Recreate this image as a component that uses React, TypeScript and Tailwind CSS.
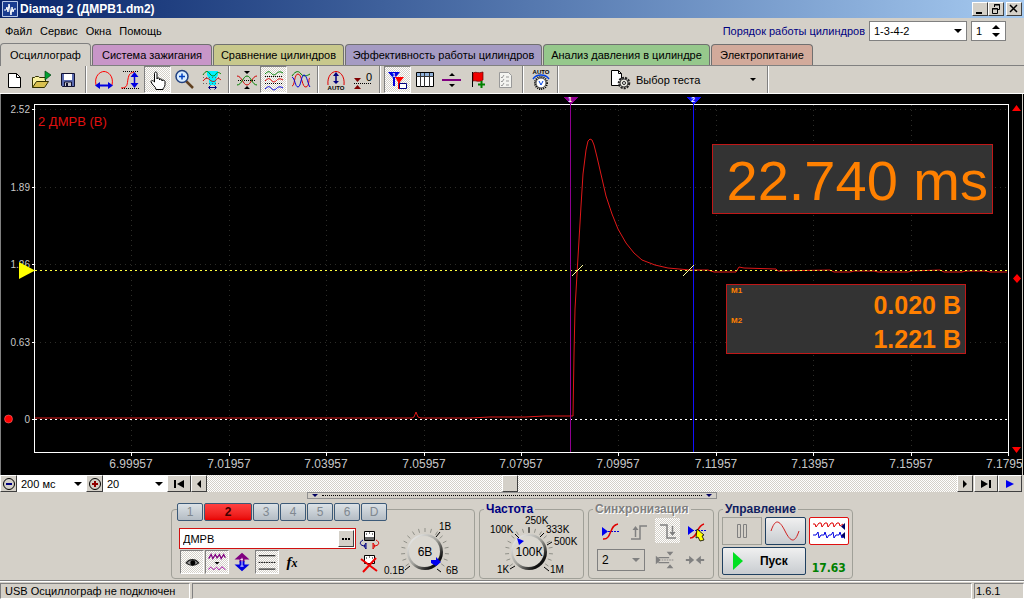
import React from "react";
import clsx from "clsx";

const hatch =
  "bg-[repeating-conic-gradient(#ffffff_0_25%,#d4d0c8_0_50%)] bg-[length:2px_2px]";
const raised =
  "border border-t-white border-l-white border-r-[#404040] border-b-[#404040] bg-[#d4d0c8]";
const sunken =
  "border border-t-[#808080] border-l-[#808080] border-r-white border-b-white";

const Icon: React.FC<{ children: React.ReactNode; className?: string }> = ({
  children,
  className = "w-6 h-6",
}) => (
  <svg viewBox="0 0 24 24" fill="none" className={clsx("shrink-0", className)}>
    {children}
  </svg>
);

/* ---------- toolbar icons ---------- */

const icons = {
  newFile: (
    <>
      <path d="M5.500 5.500h8l4 4v10h-12z" fill="#fff" stroke="#000" />
      <path d="M13.500 5.500v4h4" stroke="#000" />
    </>
  ),
  open: (
    <>
      <path d="M2.500 19.500v-10h2l1-1h3l1 1h6v4" fill="#f8f0a0" stroke="#303000" />
      <path d="M2.500 19.500l4-6h12l-4 6z" fill="#d8c050" stroke="#303000" />
      <path d="M15 3v9l6-5z" fill="#00a030" stroke="#004010" strokeWidth=".7" />
    </>
  ),
  save: (
    <>
      <path d="M4.500 5.500h13v13h-12l-1-1z" fill="#5a6ab0" stroke="#101030" />
      <path d="M7 6h8v6H7z" fill="#fff" />
      <path d="M7.500 14h7v4.500h-7z" fill="#c8c8d0" stroke="#101030" />
      <path d="M9 15h2v3H9z" fill="#101030" />
    </>
  ),
  width: (
    <>
      <path d="M4 17C2 8 8 3.500 12 3.500s10 4.500 8 13.500" stroke="#f00" />
      <path d="M5 17.500h14" stroke="#0000e0" strokeWidth="2" />
      <path d="M3 17.500l5-3.500v7zM21 17.500l-5-3.500v7z" fill="#0000e0" />
    </>
  ),
  height: (
    <>
      <path d="M4 3.500h16M3 20.500h18" stroke="#000" strokeDasharray="1 1" />
      <path d="M2 20c7 0 6-4 7-9s2-6 6-7" stroke="#f00" />
      <path d="M15.500 6v12" stroke="#0000e0" strokeWidth="1.500" />
      <path d="M15.500 4l-4 5h8zM15.500 20l-4-5h8z" fill="#0000e0" />
    </>
  ),
  hand: (
    <path
      d="M8.500 14V5.500c0-2 2.500-2 2.500 0V11c0-1.500 2.500-1.500 2.500 0v1c0-1.500 2.500-1.500 2.500 0v1c0-1.500 3-1 3 .5v3c0 3-2 3-2 5h-7c0-3-4-4-5-8 0-1 2-1.500 3.500.500z"
      fill="#fff"
      stroke="#000"
    />
  ),
  magnifier: (
    <>
      <path d="M13 13l7 7" stroke="#604020" strokeWidth="2.500" />
      <circle cx="9" cy="8.500" r="6" fill="#d8ecff" stroke="#204080" strokeWidth="1.500" />
      <path d="M6 8.500h6M9 5.500v6" stroke="#0040c0" strokeWidth="1.500" />
    </>
  ),
  waveZoom: (
    <>
      <path d="M7 3h11v4l-2 4v6H9v-6L7 7z" fill="#00f0ff" />
      <path d="M3 7c3-5 5-4 7-1s5 2 6 0 3-2 5 0" stroke="#008000" />
      <path d="M3 13c3-4 5-3 7-1s5 2 6 0 3-2 5 0" stroke="#d00000" />
      <path d="M3 9.500h18M3 15.500h18" stroke="#666" strokeDasharray="1 2" />
      <path d="M9 19.500h7M10.500 17.500l-2 2 2 2M14.500 17.500l2 2-2 2" stroke="#000080" />
    </>
  ),
  merge: (
    <>
      <path d="M9 3h6l-3 3zM9 21h6l-3-3z" fill="#000" />
      <path d="M3 12.500h18" stroke="#000" strokeDasharray="1 1" />
      <path d="M2 8c5 0 6 9 10 9s5-9 10-9" stroke="#d00000" />
      <path d="M2 17c5 0 6-9 10-9s5 9 10 9" stroke="#008000" />
    </>
  ),
  waves: (
    <>
      <path d="M3 6c4-4 5-2 7 0s4 0 5-1 3-2 6 0" stroke="#008000" />
      <path d="M3 13c4-4 5-2 7 0s4 0 5-1 3-2 6 0" stroke="#e00000" />
      <path d="M3 21c4-4 5-2 7 0s4 0 5-1 3-2 6 0" stroke="#0000e0" />
      <path d="M3 8.500h18M3 15.500h18" stroke="#000" strokeDasharray="1 1" />
    </>
  ),
  overlay: (
    <>
      <path d="M3 8c4-6 7-5 9-2s6 2 9 0" stroke="#008000" />
      <path d="M3 18c3 0 2-12 6-12s4 14 8 13 2-9 4-9" stroke="#e00000" />
      <path d="M3 9c3 1 3 10 6 10s3-12 6-12 4 10 6 12" stroke="#0000e0" />
    </>
  ),
  autoBell: (
    <>
      <path d="M4 17C3 8 8 3.500 12 3.500s9 4.500 8 13.500" stroke="#e00000" />
      <path d="M12 6v8" stroke="#000080" strokeWidth="1.500" />
      <path d="M12 4l-3 4h6zM12 16l-3-3h6z" fill="#000080" />
      <text x="12" y="22" fontSize="6" fontWeight="bold" textAnchor="middle" fill="#000">AUTO</text>
    </>
  ),
  zero: (
    <>
      <path d="M3 10h7l-3.500 4zM3 21h7l-3.500-4z" fill="#800000" />
      <path d="M3 15.500h18" stroke="#000" strokeDasharray="1 1" />
      <text x="18" y="13" fontSize="11" textAnchor="middle" fill="#000">0</text>
    </>
  ),
  markers: (
    <>
      <path d="M2 4h12l-5 6v8H7v-8z" fill="#0000e0" />
      <path d="M9 9h9l-4 5v7h-2v-7z" fill="#f00" />
      <text x="8" y="9" fontSize="6" fontWeight="bold" textAnchor="middle" fill="#fff">1</text>
      <path d="M13.500 15.500h7v5h-7z" fill="#fff" stroke="#000080" />
    </>
  ),
  table: (
    <>
      <path d="M3.500 4.500h17v14h-17z" fill="#fff" stroke="#000" />
      <path d="M4 5h16v3H4z" fill="#8fb0d8" />
      <path d="M3.500 8.500h17M7.500 5v14M11.500 5v14M16.500 5v14" stroke="#333" />
    </>
  ),
  split: (
    <>
      <path d="M9 8h6l-3-3zM9 16h6l-3 3z" fill="#000" />
      <path d="M2 12h19" stroke="#800080" strokeWidth="2" />
    </>
  ),
  flag: (
    <>
      <path d="M5.500 4v15" stroke="#000" />
      <path d="M6 5c3-2 5 1 10-1v8c-5 3-7 0-10 1z" fill="#f00000" stroke="#600" strokeWidth=".7" />
      <path d="M14.500 13v7M11 16.500h7" stroke="#008000" strokeWidth="2" />
    </>
  ),
  checklist: (
    <>
      <path d="M5.500 4.500h9l3 3v12h-12z" fill="#f4f4f0" stroke="#999" />
      <path d="M7 9l1 1 2-3M7 13l1 1 2-3M7 17l1 1 2-3M12 9h3M12 13h3M12 17h3" stroke="#999" />
    </>
  ),
  autoKnob: (
    <>
      <text x="12" y="6" fontSize="6" fontWeight="bold" textAnchor="middle" fill="#000">AUTO</text>
      <path d="M4 11c2-3 4-4 8-4s6 1 8 4" stroke="#0040e0" strokeWidth="1.500" />
      <circle cx="12" cy="15" r="6" stroke="#000" strokeWidth="2" strokeDasharray="1 1" />
      <circle cx="12" cy="15" r="5" fill="#fff" stroke="#444" />
      <path d="M10 13l2 4 2-4" stroke="#0040e0" />
    </>
  ),
  testGear: (
    <>
      <path d="M3.500 2.500h7l3 3v12h-10z" fill="#fff" stroke="#000" />
      <path d="M10.500 2.500v3h3" stroke="#000" />
      <circle cx="16" cy="15" r="5" fill="#d4d0c8" stroke="#222" strokeWidth="2.500" strokeDasharray="2 1" />
      <circle cx="16" cy="15" r="4" fill="#e8e8e0" stroke="#444" />
      <circle cx="16" cy="15" r="1.500" fill="#fff" stroke="#222" />
    </>
  ),
};

type IconName = keyof typeof icons;

const toolbar: { name: IconName; label: string; pressed?: boolean }[][] = [
  [
    { name: "newFile", label: "Новый" },
    { name: "open", label: "Открыть" },
    { name: "save", label: "Сохранить" },
  ],
  [
    { name: "width", label: "Ширина" },
    { name: "height", label: "Высота" },
    { name: "hand", label: "Рука", pressed: true },
    { name: "magnifier", label: "Увеличить" },
    { name: "waveZoom", label: "Фрагмент" },
  ],
  [
    { name: "merge", label: "Совместить" },
    { name: "waves", label: "Раздельно", pressed: true },
    { name: "overlay", label: "Наложить" },
  ],
  [
    { name: "autoBell", label: "Авто" },
    { name: "zero", label: "Ноль" },
  ],
  [
    { name: "markers", label: "Маркеры", pressed: true },
    { name: "table", label: "Таблица" },
    { name: "split", label: "Разделить" },
    { name: "flag", label: "Метка" },
    { name: "checklist", label: "Список" },
  ],
  [{ name: "autoKnob", label: "Автонастройка" }],
];

const tabs = [
  { label: "Система зажигания", className: "w-[120px] bg-[#c896c8]" },
  { label: "Сравнение цилиндров", className: "w-[131px] bg-[#c8c88c]" },
  { label: "Эффективность работы цилиндров", className: "w-[197px] bg-[#a59bc3]" },
  { label: "Анализ давления в цилиндре", className: "w-[167px] bg-[#96c88c]" },
  { label: "Электропитание", className: "w-[102px] bg-[#d2aa9b]" },
];

const Separator = () => (
  <div className="flex w-2 justify-center">
    <div className="w-0.5 border-l border-[#808080] bg-white" />
  </div>
);

const Dropdown: React.FC<{
  label: string;
  value: string;
  className?: string;
  disabled?: boolean;
}> = ({ label, value, className, disabled }) => (
  <div className={clsx("relative", className)}>
    <select
      aria-label={label}
      disabled={disabled}
      className="block h-full w-full appearance-none pl-1 text-black opacity-100 focus:outline-none"
    >
      <option>{value}</option>
    </select>
    <svg
      viewBox="0 0 8 4"
      className="pointer-events-none absolute right-1 top-1/2 h-1 w-2 -translate-y-1/2"
    >
      <path d="M0 0h8L4 4z" fill={disabled ? "#808080" : "#000"} />
    </svg>
  </div>
);

const TitleBar = () => (
  <header className="flex h-[18px] items-center bg-linear-to-r from-[#0a246a] to-[#a6caf0] pl-0.5 pr-0.5 text-white">
    <svg viewBox="0 0 16 16" className="h-4 w-4">
      <path d="M.5.500h15v15H.500z" fill="#1a3c90" stroke="#b8c8e8" />
      <path d="M2 9h2l1-3 1 5 1-8 2 11 1-8 1 5 1-3h2" stroke="#fff" fill="none" />
    </svg>
    <h1 className="ml-0.5 grow text-[12px] font-bold">Diamag 2 (ДМРВ1.dm2)</h1>
    <button aria-label="Свернуть" className={clsx(raised, "h-3.5 w-4")}>
      <svg viewBox="0 0 14 12" className="h-3 w-3.5">
        <path d="M3 9h6v2H3z" />
      </svg>
    </button>
    <button aria-label="Восстановить" className={clsx(raised, "h-3.5 w-4")}>
      <svg viewBox="0 0 14 12" className="h-3 w-3.5" fill="none" stroke="#000">
        <path d="M5.500 4V1.500h5v5H9M5 2h6M3.500 5.500h5v5h-5zM3 6h6" />
      </svg>
    </button>
    <button aria-label="Закрыть" className={clsx(raised, "ml-0.5 h-3.5 w-4")}>
      <svg viewBox="0 0 14 12" className="h-3 w-3.5" stroke="#000" strokeWidth="1.500">
        <path d="M3 2l7 7M10 2l-7 7" />
      </svg>
    </button>
  </header>
);

const MenuBar = () => (
  <div className="flex h-[25px] items-center justify-between pl-[5px] pr-[18px]">
    <nav className="flex gap-2">
      <button>Файл</button>
      <button>Сервис</button>
      <button>Окна</button>
      <button>Помощь</button>
    </nav>
    <div className="flex items-center gap-1">
      <span className="text-[#000080]">Порядок работы цилиндров</span>
      <Dropdown
        label="Порядок работы цилиндров"
        value="1-3-4-2"
        className="h-5 w-[98px] border border-[#808080] bg-white"
      />
      <div className="flex h-5 w-[35px] items-center border border-[#808080] bg-white">
        <input
          aria-label="Номер цилиндра"
          defaultValue="1"
          className="w-5 pl-1 focus:outline-none"
        />
        <div className="flex flex-col gap-1">
          <button aria-label="Больше">
            <svg viewBox="0 0 8 4" className="block h-1 w-2"><path d="M0 4h8L4 0z" /></svg>
          </button>
          <button aria-label="Меньше">
            <svg viewBox="0 0 8 4" className="block h-1 w-2"><path d="M0 0h8L4 4z" /></svg>
          </button>
        </div>
      </div>
    </div>
  </div>
);

const Tabs = () => (
  <div role="tablist" className="flex h-[23px] items-end gap-px border-b border-[#808080]">
    <button
      role="tab"
      aria-selected="true"
      className="-mb-px h-[23px] w-[91px] rounded-t border border-b-0 border-[#808080] bg-[#d4d0c8]"
    >
      Осциллограф
    </button>
    {tabs.map((tab) => (
      <button
        key={tab.label}
        role="tab"
        aria-selected="false"
        className={clsx(
          "h-[21px] whitespace-nowrap rounded-t border border-b-0 border-[#707070]",
          tab.className
        )}
      >
        {tab.label}
      </button>
    ))}
  </div>
);

const Toolbar = () => (
  <div className="flex h-[27px] pl-px">
    {toolbar.map((group, i) => (
      <React.Fragment key={i}>
        {group.map((item) => (
          <button
            key={item.name}
            aria-label={item.label}
            className={clsx(
              "flex w-[27px] items-center justify-center",
              item.pressed && [hatch, sunken]
            )}
          >
            <Icon>{icons[item.name]}</Icon>
          </button>
        ))}
        <Separator />
      </React.Fragment>
    ))}
    <button className="flex w-[202px] items-center pl-[46px] pr-2">
      <Icon>{icons.testGear}</Icon>
      <span className="ml-1 grow text-left">Выбор теста</span>
      <svg viewBox="0 0 6 3" className="h-[3px] w-1.5"><path d="M0 0h6L3 3z" /></svg>
    </button>
    <Separator />
  </div>
);

/* ---------- oscilloscope screen ---------- */

const yTicks = [
  { y: 15, label: "2.52" },
  { y: 93, label: "1.89" },
  { y: 170, label: "1.26" },
  { y: 248, label: "0.63" },
  { y: 325, label: "0" },
];
const xTicks = [
  { x: 131, label: "6.99957" },
  { x: 229, label: "7.01957" },
  { x: 326, label: "7.03957" },
  { x: 424, label: "7.05957" },
  { x: 521, label: "7.07957" },
  { x: 618, label: "7.09957" },
  { x: 716, label: "7.11957" },
  { x: 813, label: "7.13957" },
  { x: 911, label: "7.15957" },
  { x: 1008, label: "7.1795" },
];

const trace =
  "M35 324H412L414 323 416 318 418 323 421 324H470L490 323H525L545 322 573 322 " +
  "574 260 575 215 577 180 579 146 581 112 583 80 586 56 588 47 590 45 592 46 594 51 " +
  "597 63 600 76 606 102 612 120 618 135 626 149 634 159 642 166 655 171 668 174 690 176 " +
  "H708L714 178H736L739 173 744 174 776 175 778 177 830 176 834 178 850 178 854 177 874 177 878 178 " +
  "908 178 912 177 940 176 944 178 962 178 966 177 986 177 990 178 1007 178";

const Screen = () => (
  <main className="relative border-t border-white bg-black">
    <svg
      viewBox="0 0 1024 381"
      className="block w-full"
      fill="none"
      shapeRendering="crispEdges"
    >
      <path d="M.5 0v381" stroke="#808080" />
      <path d="M1022.500 0v381" stroke="#d4d0c8" />

      {yTicks.map((t) => (
        <g key={t.label}>
          <path d={`M35 ${t.y + 0.5}H1008`} stroke="#2c2c28" strokeDasharray="1 4" />
          <path d={`M32 ${t.y + 0.5}h3`} stroke="#fff" />
          <text x="30" y={t.y + 4} fontSize="10" textAnchor="end" fill="#c8c8c8">
            {t.label}
          </text>
        </g>
      ))}
      {xTicks.map((t) => (
        <g key={t.label}>
          <path d={`M${t.x + 0.5} 11V358`} stroke="#2c2c28" strokeDasharray="1 4" />
          <path d={`M${t.x + 0.5} 358v4`} stroke="#fff" />
          <text
            x={t.x === 1008 ? 986 : t.x}
            y="374"
            fontSize="12"
            textAnchor={t.x === 1008 ? "start" : "middle"}
            fill="#c8c8c8"
          >
            {t.label}
          </text>
        </g>
      ))}
      <path d="M34.500 10.500H1008.500V358.500H34.500z" stroke="#fff" />

      <text x="38" y="32" fontSize="13" fill="#e01010">2 ДМРВ (В)</text>

      <path d="M35 325.500H1008" stroke="#fff" strokeDasharray="2 3" />
      <path d={trace} stroke="#e01818" shapeRendering="auto" />
      <path d="M35 176.500H1008" stroke="#ffff40" strokeDasharray="2 3" />

      <path d="M570.500 5V358" stroke="#900090" />
      <path d="M563 3h15l-7 7z" fill="#900090" />
      <path d="M693.500 5V358" stroke="#1010ff" />
      <path d="M686 3h15l-7 7z" fill="#1010ff" />
      <g fill="#fff" fontSize="7" fontWeight="bold" textAnchor="middle">
        <text x="570" y="8">1</text>
        <text x="693" y="8">2</text>
      </g>
      <path d="M572 182l11-11M683 182l11-11" stroke="#ffffa0" shapeRendering="auto" />

      <g shapeRendering="auto">
        <path d="M19 168v17l16-8.500z" fill="#ff0" />
        <circle cx="8.500" cy="325" r="4" fill="#f00" stroke="#f88" strokeWidth=".5" />
        <path d="M1012 17h9l-4.500-6zM1012 353h9l-4.500 6zM1017 180l4 4.500-4 4.500-4-4.500z" fill="#f00" />
      </g>
    </svg>

    <div className="absolute right-[31px] top-[50px] flex h-[70px] w-[281px] items-center justify-end border border-[#c01818] bg-[#333] pr-1 pt-1 text-[56px] leading-none text-[#ff8000]">
      22.740 ms
    </div>
    <dl className="absolute right-[58px] top-[190px] grid h-[70px] w-[240px] grid-cols-[auto_1fr] grid-rows-[30px_38px] border border-[#c01818] bg-[#333] px-1 font-bold text-[#ff8000]">
      <dt className="text-[8px] leading-3">M1</dt>
      <dd className="text-right text-[25px] leading-10">0.020 В</dd>
      <dt className="text-[8px] leading-3">M2</dt>
      <dd className="text-right text-[25px] leading-12">1.221 В</dd>
    </dl>
  </main>
);

const ScrollRow = () => (
  <div className="flex h-[17px]">
    <button aria-label="Уменьшить развёртку" className={clsx(raised, "flex w-[17px] items-center justify-center")}>
      <svg viewBox="0 0 14 14" className="h-3.5 w-3.5" fill="none">
        <circle cx="7" cy="7" r="5.500" stroke="#000" />
        <path d="M4 7h6" stroke="#000080" strokeWidth="2" />
      </svg>
    </button>
    <Dropdown label="Развёртка" value="200 мс" className="w-[69px] bg-white" />
    <button aria-label="Увеличить масштаб" className={clsx(raised, "flex w-[17px] items-center justify-center")}>
      <svg viewBox="0 0 14 14" className="h-3.5 w-3.5" fill="none">
        <circle cx="7" cy="7" r="5.500" stroke="#000" />
        <path d="M4 7h6M7 4v6" stroke="#900000" strokeWidth="2" />
      </svg>
    </button>
    <Dropdown label="Масштаб" value="20" className="w-16 bg-white" />
    <button aria-label="В начало" className={clsx(raised, "flex w-6 items-center justify-center")}>
      <svg viewBox="0 0 12 8" className="h-2 w-3"><path d="M1 0h2v8H1zM11 0v8L4 4z" /></svg>
    </button>
    <button aria-label="Назад" className={clsx(raised, "flex w-4 items-center justify-center")}>
      <svg viewBox="0 0 4 8" className="h-2 w-1"><path d="M4 0v8L0 4z" /></svg>
    </button>
    <input
      type="range"
      aria-label="Прокрутка"
      min={0}
      max={1000}
      defaultValue={402}
      className={clsx(
        hatch,
        "h-full min-w-0 grow appearance-none [&::-webkit-slider-thumb]:h-[17px] [&::-webkit-slider-thumb]:w-4 [&::-webkit-slider-thumb]:appearance-none [&::-webkit-slider-thumb]:border [&::-webkit-slider-thumb]:border-t-white [&::-webkit-slider-thumb]:border-l-white [&::-webkit-slider-thumb]:border-r-[#404040] [&::-webkit-slider-thumb]:border-b-[#404040] [&::-webkit-slider-thumb]:bg-[#d4d0c8]"
      )}
    />
    <button aria-label="Вперёд" className={clsx(raised, "flex w-4 items-center justify-center")}>
      <svg viewBox="0 0 4 8" className="h-2 w-1"><path d="M0 0v8l4-4z" /></svg>
    </button>
    <button aria-label="В конец" className={clsx(raised, "ml-px flex w-6 items-center justify-center")}>
      <svg viewBox="0 0 12 8" className="h-2 w-3"><path d="M9 0h2v8H9zM1 0v8l7-4z" /></svg>
    </button>
    <button aria-label="Воспроизвести" className={clsx(raised, "mr-0.5 flex w-6 items-center justify-center")}>
      <svg viewBox="0 0 8 8" className="h-2 w-2"><path d="M0 0v8l8-4z" fill="#0000f0" /></svg>
    </button>
  </div>
);

/* ---------- control panels ---------- */

const Group: React.FC<{
  title: string;
  titleClass: string;
  className?: string;
  children: React.ReactNode;
}> = ({ title, titleClass, className, children }) => (
  <fieldset className={clsx("h-[77px] min-w-0 rounded border border-[#a0a098]", className)}>
    <legend className={clsx("ml-1 px-0.5 text-[12px] font-bold leading-[14px]", titleClass)}>
      {title}
    </legend>
    {children}
  </fieldset>
);

const dialTicks = Array.from({ length: 17 }, (_, i) => -216 + i * 15.75);

const Dial: React.FC<{
  label: string;
  value: string;
  cx: number;
  cy: number;
  pointer: string;
  children: React.ReactNode;
}> = ({ label, value, cx, cy, pointer, children }) => (
  <div className="relative min-w-0 grow">
    <svg viewBox="0 0 100 62" className="block h-[62px] w-[100px] overflow-visible" fontSize="10">
      <defs>
        <linearGradient id={`rim-${value}`} x1="0" y1="0" x2="1" y2="1">
          <stop offset="0" stopColor="#fff" />
          <stop offset=".5" stopColor="#a0a09a" />
          <stop offset=".8" stopColor="#101010" />
        </linearGradient>
      </defs>
      {dialTicks.map((a) => {
        const c = Math.cos((a * Math.PI) / 180);
        const s = Math.sin((a * Math.PI) / 180);
        return (
          <path
            key={a}
            d={`M${cx + c * 20} ${cy + s * 20}L${cx + c * 24} ${cy + s * 24}`}
            stroke="#909088"
          />
        );
      })}
      <circle cx={cx} cy={cy} r="18" fill={`url(#rim-${value})`} />
      <circle cx={cx - 0.5} cy={cy - 0.5} r="15.500" fill="#dad7d0" />
      <path d={pointer} fill="#0000f0" />
      <text x={cx} y={cy + 4} fontSize="12" textAnchor="middle">
        {value}
      </text>
      {children}
    </svg>
    <input
      type="range"
      aria-label={label}
      className="absolute inset-0 h-full w-full cursor-pointer opacity-0"
    />
  </div>
);

const channels = ["1", "2", "3", "4", "5", "6", "D"];

const ChannelPanel = () => (
  <fieldset className="h-[77px] w-[304px] min-w-0 rounded border border-[#a0a098]">
    <legend className="ml-[5px] flex h-3.5 gap-px pt-px">
      {channels.map((ch) => (
        <button
          key={ch}
          className={clsx(
            "h-[18px] rounded-xs border border-[#3c5a78] text-[12px]",
            ch === "2"
              ? "w-12 bg-linear-to-b from-[#ff4040] to-[#e80000] font-bold text-[#400000]"
              : "w-[26px] bg-linear-to-b from-[#dce2e6] to-[#b4bcc4] text-[#808890]"
          )}
        >
          {ch}
        </button>
      ))}
    </legend>
    <div className="flex pl-[7px]">
      <div className="w-[177px] shrink-0 pt-3">
        <div className="flex h-[21px] border border-[#d01010] bg-white p-px">
          <input
            aria-label="Имя канала"
            defaultValue="ДМРВ"
            className="min-w-0 grow pl-0.5 focus:outline-none"
          />
          <button aria-label="Выбрать датчик" className={clsx(raised, "flex w-4 items-center justify-center")}>
            <svg viewBox="0 0 8 2" className="h-0.5 w-2"><path d="M0 0h2v2H0zM3 0h2v2H3zM6 0h2v2H6z" /></svg>
          </button>
        </div>
        <div className="flex h-[25px] gap-px pl-px pt-px">
          <button aria-label="Показать" className={clsx(hatch, sunken, "flex w-6 items-center justify-center")}>
            <Icon className="h-5 w-5">
              <path d="M5 13c4-5 11-5 15 0-4 4-11 4-15 0z" fill="#999" stroke="#222" strokeWidth="1.500" />
              <circle cx="13" cy="13" r="3" fill="#000" />
            </Icon>
          </button>
          <button aria-label="Фильтр" className={clsx(hatch, sunken, "flex w-6 items-center justify-center")}>
            <Icon className="h-5 w-5">
              <path d="M2 8l3-5 2 5 3-5 2 4 3-4 2 5 3-5 2 4" stroke="#800080" strokeWidth="1.500" />
              <path d="M9 12h6l-3 3z" fill="#000" />
              <path d="M2 21c3-6 4 0 6 0s3-5 5-1 3-2 5-2 2 3 4 3" stroke="#a000a0" strokeWidth="1.200" />
            </Icon>
          </button>
          <button aria-label="Инвертировать" className="flex w-6 items-center justify-center">
            <Icon className="h-5 w-5">
              <path d="M12 1l9 8h-6v3H9V9H3z" fill="#800080" />
              <path d="M12 23l9-8h-6v-4H9v4H3z" fill="#0000e0" />
              <path d="M12 7v10M10 9h3M10 17h4" stroke="#fff" />
            </Icon>
          </button>
          <button aria-label="Линии" className={clsx(hatch, sunken, "flex w-6 items-center justify-center")}>
            <Icon className="h-5 w-5">
              <path d="M2 4.500h20M2 20.500h20" stroke="#000" strokeWidth="1.200" />
              <path d="M2 12.500h20" stroke="#000" strokeDasharray="2 1" strokeWidth="1.200" />
            </Icon>
          </button>
          <button aria-label="Функция" className="w-6 font-['Liberation_Serif',serif] text-[15px] font-bold italic">
            f<span className="text-[12px]">x</span>
          </button>
        </div>
      </div>
      <div className="flex w-[26px] shrink-0 flex-col items-center pt-3">
        <button aria-label="Подключить">
          <Icon>
            <path d="M7.500 3.500h10v9h-10z" fill="#fff" stroke="#000" />
            <path d="M9 6h1M12 5h1M15 6h1" stroke="#000" />
            <path d="M8 9h9v3H8z" fill="#666" />
            <path d="M6 12c-4 2-4 6 3 6M9 15v6l-2-3z" stroke="#000080" />
            <path d="M19 12c4 2 4 6-3 6M16 15v6l2-3z" stroke="#e00000" />
          </Icon>
        </button>
        <button aria-label="Отключить">
          <Icon>
            <path d="M7.500 3.500h10v8h-10z" fill="#fff" stroke="#000" />
            <path d="M9 6h1M12 5h1M15 6h1" stroke="#000" />
            <path d="M4 7l16 12M19 6L6 20" stroke="#f00000" strokeWidth="2" />
          </Icon>
        </button>
      </div>
      <Dial label="Предел" value="6В" cx={43} cy={36} pointer="M49 44h5v-3l5 5-5 4-5-3z">
        <path d="M54 21l4-5M55 53l4 3M28 50l-5 4" stroke="#000" />
        <text x="57" y="14">1В</text>
        <text x="2" y="58">0.1В</text>
        <text x="64" y="58">6В</text>
      </Dial>
    </div>
  </fieldset>
);

const FrequencyPanel = () => (
  <Group title="Частота" titleClass="text-[#000080]" className="w-[105px]">
    <Dial label="Частота" value="100К" cx={49} cy={36} pointer="M37 22l7 3-5 4z">
      <path d="M35 18l4 4M49 11v6M60 21l4-4M67 29l5-3M64 51l5 4M30 53l5-3" stroke="#000" />
      <text x="10" y="17">100K</text>
      <text x="45" y="8">250K</text>
      <text x="66" y="17">333K</text>
      <text x="74" y="29">500K</text>
      <text x="17" y="57">1K</text>
      <text x="70" y="57">1M</text>
    </Dial>
  </Group>
);

const SyncPanel = () => (
  <Group
    title="Синхронизация"
    titleClass="text-[#808080] [text-shadow:1px_1px_0_#ffffff]"
    className="w-[126px]"
  >
    <div className="flex gap-1 pl-2 pt-0.5">
      <button aria-label="Уровень" className="flex h-[25px] w-[25px] items-center justify-center">
        <Icon>
          <path d="M4 12.500h18" stroke="#0000e0" strokeDasharray="2 1" />
          <path d="M4 8v9l6-4.500z" fill="#0000f0" />
          <path d="M5 20c9 1 6-14 15-15" stroke="#e00000" strokeWidth="1.500" />
        </Icon>
      </button>
      <button aria-label="По фронту" className="flex h-[25px] w-[25px] items-center justify-center">
        <Icon>
          <path d="M4 20h9V7h7M8.500 18v-8" stroke="#808080" strokeWidth="1.500" />
          <path d="M8.500 7l-3 4h6z" fill="#808080" />
        </Icon>
      </button>
      <button aria-label="По спаду" className={clsx(hatch, "flex h-[25px] w-[25px] items-center justify-center")}>
        <Icon>
          <path d="M4 6h7v13h9M16.500 7v8" stroke="#808080" strokeWidth="1.500" />
          <path d="M16.500 17l-3-4h6z" fill="#808080" />
        </Icon>
      </button>
      <button aria-label="Выбрать уровень" className="flex h-[25px] w-[25px] items-center justify-center">
        <Icon>
          <path d="M4 11.500h18" stroke="#0000e0" strokeDasharray="2 1" />
          <path d="M3 7v9l6-4.500z" fill="#0000f0" />
          <path d="M5 19c8 0 6-12 14-14" stroke="#e00000" strokeWidth="1.500" />
          <path d="M12 10l7 6-2 1 2 4-4 1-2-4-2 1z" fill="#ff0" stroke="#000" strokeWidth=".8" />
        </Icon>
      </button>
    </div>
    <div className="flex items-center gap-2.5 pl-2 pt-1.5">
      <Dropdown
        label="Канал синхронизации"
        value="2"
        disabled
        className="h-[22px] w-12 border border-[#808080] text-[12px]"
      />
      <button aria-label="Гистерезис">
        <Icon className="h-5 w-5">
          <path d="M4 9h13M4 15h13" stroke="#808080" strokeWidth="1.500" />
          <path d="M1 7v10l6-5z" fill="#808080" />
          <path d="M8 12h14" stroke="#808080" strokeDasharray="2 1" />
          <path d="M14 2h8l-4 5zM14 22h8l-4-5z" fill="#808080" />
        </Icon>
      </button>
      <button aria-label="Центр">
        <Icon className="h-5 w-5">
          <path d="M1 12h6M17 12h6" stroke="#808080" strokeWidth="2.500" />
          <path d="M5 7v10l6-5zM19 7v10l-6-5z" fill="#808080" />
        </Icon>
      </button>
    </div>
  </Group>
);

const ControlPanel = () => (
  <Group title="Управление" titleClass="text-[#102060]" className="w-[135px]">
    <div className="grid grid-cols-3 gap-x-[3px] gap-y-0.5 px-[3px] pt-px">
      <button
        aria-label="Пауза"
        className="flex h-7 items-center justify-center border border-[#a0a098]"
      >
        <svg viewBox="0 0 12 16" className="h-4 w-3" fill="none" stroke="#808080">
          <path d="M1.500 1.500h3v13h-3zM7.500 1.500h3v13h-3z" />
        </svg>
      </button>
      <button
        aria-label="Однократно"
        className="flex h-7 items-center justify-center rounded-xs border border-[#204060] bg-linear-to-b from-[#f0f0f0] to-[#c8ccd0]"
      >
        <svg viewBox="0 0 30 20" className="h-5 w-[30px]" fill="none" stroke="#d02020">
          <path d="M1 10C5-2 9-2 15 10s10 12 14 0" />
        </svg>
      </button>
      <button
        aria-label="Непрерывно"
        className="flex h-7 items-center justify-center rounded-xs border border-[#e01010] bg-white"
      >
        <svg viewBox="0 0 32 20" className="h-5 w-8" fill="none">
          <path d="M0 3h2l1 3 3-4h2l1 4 3-4h2l1 4 3-4h2l1 4 3-4h2l1 3 3-2" stroke="#e00000" />
          <path d="M0 14h3l2-3 1 6 2-3h3l1-3 2 6 2-3h2l2-3 1 6 2-3h3l1-3 2 6 2-3" stroke="#0000e0" />
          <path d="M32 2v7l-4-3.500zM32 11v7l-4-3.500z" fill="#000060" />
        </svg>
      </button>
      <button className="col-span-2 flex h-7 items-center rounded-xs border border-[#204060] bg-linear-to-b from-[#f0f0f0] to-[#c8ccd0] pl-2.5 font-bold">
        <svg viewBox="0 0 10 18" className="h-[18px] w-2.5">
          <path d="M0 0v18l10-9z" fill="#00e020" />
        </svg>
        <span className="grow text-center text-[12px]">Пуск</span>
      </button>
      <output className="self-end text-center font-['DejaVu_Sans_Condensed','DejaVu_Sans',sans-serif] text-[12px] font-bold leading-[14px] text-[#008000]">
        17.63
      </output>
    </div>
  </Group>
);

const StatusBar = () => (
  <footer className="flex h-[18px] gap-0.5 border-t border-white pt-px">
    <div className={clsx(sunken, "w-[190px] whitespace-nowrap pl-1 leading-[15px]")}>
      USB Осциллограф не подключен
    </div>
    <div className={clsx(sunken, "grow")} />
    <div className={clsx(sunken, "w-[50px] pl-px leading-[15px]")}>1.6.1</div>
  </footer>
);

export default function App() {
  return (
    <div className="bg-[#d4d0c8] font-['Liberation_Sans',Arial,sans-serif] text-[11px] leading-4 text-black">
      <TitleBar />
      <MenuBar />
      <Tabs />
      <Toolbar />
      <Screen />
      <ScrollRow />
      <section className="border-b border-[#808080] pb-px">
        <div className="mx-auto mb-[3px] flex h-[7px] w-2/5 items-center gap-1 border border-[#909090] px-1">
          <svg viewBox="0 0 6 3" className="h-[3px] w-1.5"><path d="M0 0h6L3 3z" fill="#000060" /></svg>
          <div className="grow border-t border-dotted border-black" />
          <svg viewBox="0 0 6 3" className="h-[3px] w-1.5"><path d="M0 0h6L3 3z" fill="#000060" /></svg>
        </div>
        <div className="flex justify-center gap-1">
          <ChannelPanel />
          <FrequencyPanel />
          <SyncPanel />
          <ControlPanel />
        </div>
      </section>
      <StatusBar />
    </div>
  );
}
